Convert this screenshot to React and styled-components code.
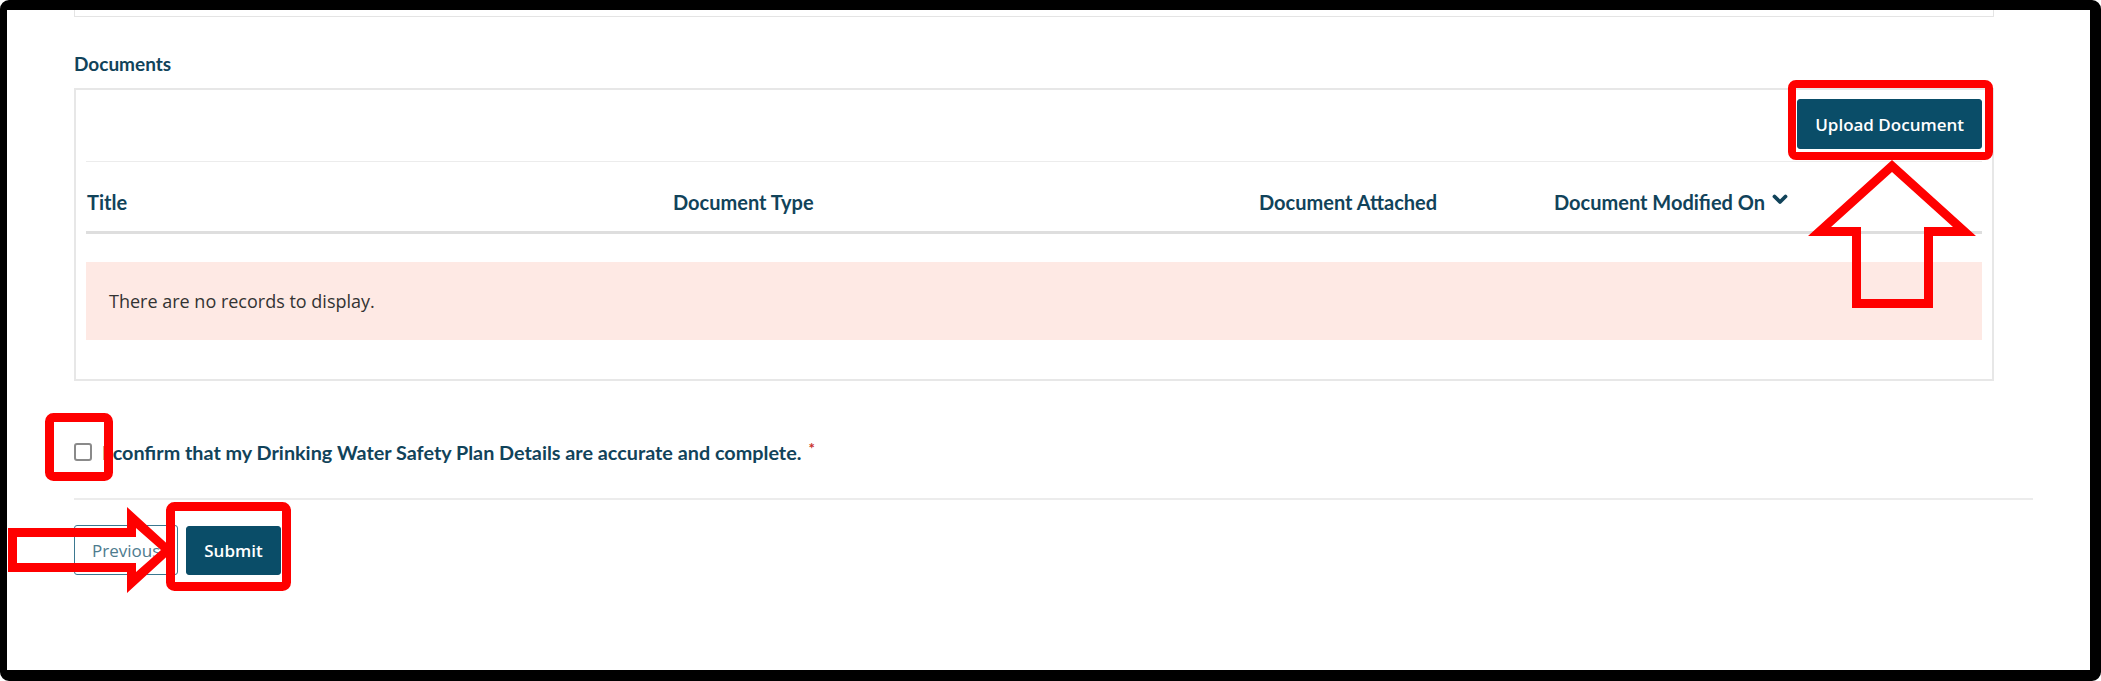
import React from 'react';
import styled, { createGlobalStyle } from 'styled-components';

const GlobalStyle = createGlobalStyle`
  html, body {
    margin: 0;
    padding: 0;
    background: #ffffff;
  }
`;

const Frame = styled.div`
  position: relative;
  box-sizing: border-box;
  width: 2101px;
  height: 681px;
  border-style: solid;
  border-color: #000;
  border-width: 10px 11px 11px 7px;
  border-radius: 9px;
  background: #fff;
  overflow: hidden;
  padding-left: 67px;
  font-family: Lato, "Liberation Sans", sans-serif;
  color: #11435a;
`;

const PrevCardEdge = styled.div`
  box-sizing: border-box;
  width: 1920px;
  height: 7px;
  border: 1px solid #e4e4e4;
  border-top: 0;
`;

const SectionTitle = styled.div`
  margin: 36px 0 13px;
  font-size: 19px;
  line-height: 22px;
  font-weight: 700;
`;

const Panel = styled.div`
  box-sizing: border-box;
  width: 1920px;
  height: 293px;
  border: 2px solid #e7e7e7;
  padding: 9px 10px 0 10px;
`;

const Toolbar = styled.div`
  display: flex;
  justify-content: flex-end;
  padding-bottom: 12px;
  border-bottom: 1px solid #ececec;
`;

const Button = styled.button`
  box-sizing: border-box;
  height: ${p => p.$h || 50}px;
  padding: 0 ${p => p.$px || 18}px;
  border-radius: 3px;
  font-family: "Open Sans", "Liberation Sans", sans-serif;
  font-size: ${p => p.$fs || 17}px;
  cursor: pointer;
  ${p => p.$outline ? `
    background: #fff;
    color: #4d7b8e;
    border: 1px solid #3b7890;
    font-weight: 400;
  ` : `
    background: #0a4d68;
    color: #fff;
    border: 1px solid #0a4d68;
    font-weight: 600;
  `}
`;

const HeaderRow = styled.div`
  display: grid;
  grid-template-columns: 586px 586px 295px 1fr;
  align-items: end;
  height: 72px;
  box-sizing: border-box;
  padding: 0 0 18px 1px;
  border-bottom: 3px solid #dedede;
`;

const HeaderCell = styled.div`
  display: flex;
  align-items: center;
  gap: 7px;
  font-size: 20px;
  line-height: 22px;
  font-weight: 700;
  white-space: nowrap;
`;

const Chevron = styled.svg`
  width: 16px;
  height: 11px;
  margin-top: -6px;
`;

const EmptyRow = styled.div`
  display: flex;
  align-items: center;
  margin-top: 28px;
  height: 78px;
  padding-left: 23px;
  background: #fee9e4;
  font-family: "Open Sans", "Liberation Sans", sans-serif;
  font-size: 18px;
  color: #333;
`;

const ConfirmRow = styled.label`
  display: flex;
  align-items: center;
  gap: 10px;
  margin-top: 60px;
  height: 22px;
  font-size: 19.8px;
  font-weight: 700;
`;

const CheckBox = styled.input.attrs({ type: 'checkbox' })`
  appearance: none;
  box-sizing: border-box;
  width: 18px;
  height: 18px;
  margin: 0;
  border: 2px solid #8a8a8a;
  border-radius: 3px;
  background: #fff;
`;

const Required = styled.span`
  margin-left: -3px;
  color: #c8312b;
  font-size: 15px;
  align-self: flex-start;
  margin-top: -2px;
`;

const Divider = styled.div`
  width: 1959px;
  margin-top: 35px;
  border-top: 2px solid #ececec;
`;

const Actions = styled.div`
  display: flex;
  align-items: center;
  gap: 8px;
  margin-top: 25px;
`;

const Overlay = styled.svg`
  position: absolute;
  top: -10px;
  left: -7px;
  width: 2101px;
  height: 681px;
  pointer-events: none;
`;

const Annotations = () => (
  <Overlay viewBox="0 0 2101 681">
    <g fill="none" stroke="#ff0000">
      <rect x="1792" y="84" width="197" height="72" rx="4" strokeWidth="8" />
      <rect x="49.5" y="417.5" width="59" height="59" rx="4" strokeWidth="9" />
      <rect x="170.5" y="506.5" width="116" height="80" rx="4" strokeWidth="9" />
    </g>
    <g fill="#ff0000" fillRule="evenodd">
      <path d="M1892 160 L1976 236 L1933 236 L1933 308 L1852 308 L1852 236 L1808 236 Z
               M1892 172 L1953 227 L1924 227 L1924 299 L1861 299 L1861 227 L1831 227 Z" />
      <path d="M8 528 L127 528 L127 507 L174 550 L127 593 L127 572 L8 572 Z
               M17 537 L136 537 L136 528 L161 550 L136 572 L136 563 L17 563 Z" />
    </g>
  </Overlay>
);

const columns = ['Title', 'Document Type', 'Document Attached'];

export default function App() {
  return (
    <>
      <GlobalStyle />
      <Frame>
        <PrevCardEdge />
        <SectionTitle>Documents</SectionTitle>
        <Panel>
          <Toolbar>
            <Button $px={17}>Upload Document</Button>
          </Toolbar>
          <HeaderRow>
            {columns.map(c => (
              <HeaderCell key={c}>{c}</HeaderCell>
            ))}
            <HeaderCell>
              Document Modified On
              <Chevron viewBox="0 0 16 11">
                <path d="M2.5 2.5 L8 8 L13.5 2.5" fill="none" stroke="currentColor" strokeWidth="3.8" strokeLinecap="round" strokeLinejoin="round" />
              </Chevron>
            </HeaderCell>
          </HeaderRow>
          <EmptyRow>There are no records to display.</EmptyRow>
        </Panel>
        <ConfirmRow>
          <CheckBox />
          <span>I confirm that my Drinking Water Safety Plan Details are accurate and complete.</span>
          <Required>*</Required>
        </ConfirmRow>
        <Divider />
        <Actions>
          <Button $outline $px={17}>Previous</Button>
          <Button $h={49} $px={17}>Submit</Button>
        </Actions>
        <Annotations />
      </Frame>
    </>
  );
}
